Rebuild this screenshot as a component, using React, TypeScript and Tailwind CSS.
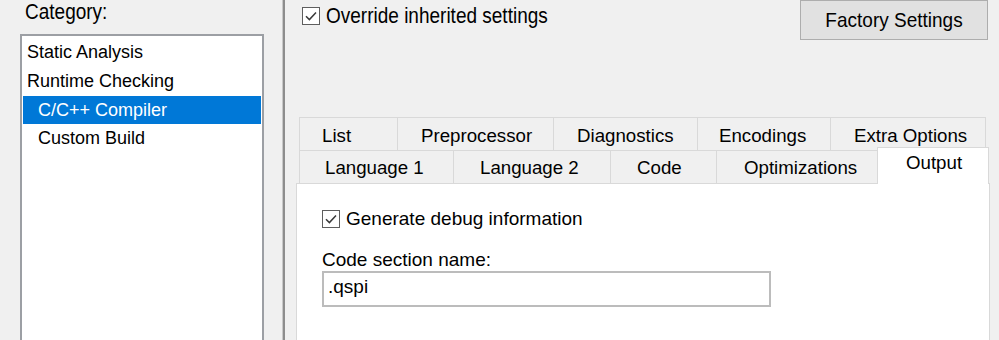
import React from "react";

const CheckBox = () => (
  <span className="flex h-[18px] w-[18px] shrink-0 items-center justify-center border-[1.5px] border-[#5e5e5e] bg-white">
    <svg width="14" height="14" viewBox="0 0 14 14">
      <path d="M2 7.2 L5.4 10.6 L12 3.6" fill="none" stroke="#3a3a3a" strokeWidth="1.5" />
    </svg>
  </span>
);

type Tab = { label: string; w: number; pl: number; selected?: boolean };

const row1: Tab[] = [
  { label: "List", w: 98, pl: 22 },
  { label: "Preprocessor", w: 156, pl: 23 },
  { label: "Diagnostics", w: 144, pl: 23 },
  { label: "Encodings", w: 133, pl: 21 },
  { label: "Extra Options", w: 156, pl: 23 },
];

const row2: Tab[] = [
  { label: "Language 1", w: 154, pl: 25 },
  { label: "Language 2", w: 157, pl: 26 },
  { label: "Code", w: 106, pl: 26 },
  { label: "Optimizations", w: 161, pl: 27 },
  { label: "Output", w: 112, pl: 28, selected: true },
];

export default function App() {
  return (
    <div className="flex h-[340px] w-[999px] overflow-hidden bg-[#f0f0f0] font-['Liberation_Sans',Arial,sans-serif] text-black">
      {/* Left column */}
      <div className="flex w-[282px] shrink-0 flex-col">
        <div className="h-[34px] shrink-0 pl-[25px] pt-[1px]">
          <span className="inline-block origin-center scale-y-[1.15] text-[19px] leading-[22px]">Category:</span>
        </div>
        <div className="ml-[20px] h-[320px] w-[244px] shrink-0 border-2 border-[#9c9fa4] bg-white pt-[2px] text-[18px] leading-[29px]">
          <div className="mx-px h-[29px] pl-[4px]">Static Analysis</div>
          <div className="mx-px h-[29px] pl-[4px]">Runtime Checking</div>
          <div className="mx-px h-[28px] bg-[#0078d7] pl-[15px] leading-[28px] text-white">C/C++ Compiler</div>
          <div className="mx-px h-[29px] pl-[15px]">Custom Build</div>
        </div>
      </div>

      {/* Separator */}
      <div className="flex w-[3px] shrink-0">
        <div className="w-px bg-[#c8c8c8]" />
        <div className="w-[2px] bg-[#8d8d8d]" />
      </div>

      {/* Right column */}
      <div className="flex w-[702px] flex-col pl-[11px]">
        <div className="flex h-[117px] shrink-0 items-start justify-between">
          <div className="mt-[5px] ml-[6px] flex items-center gap-[6px]">
            <CheckBox />
            <span className="inline-block origin-center scale-y-[1.17] text-[19px] leading-[22px]">
              Override inherited settings
            </span>
          </div>
          <button className="-mr-px flex h-[40px] w-[188px] items-center justify-center border border-[#adadad] bg-[#e1e1e1]">
            <span className="inline-block origin-center scale-y-[1.1] text-[19px] leading-[22px]">Factory Settings</span>
          </button>
        </div>

        {/* Tabs */}
        <div className="w-[694px] shrink-0 text-[18.7px] leading-[22px]">
          <div className="flex h-[33px] pl-[3px]">
            {row1.map((t, i) => (
              <div
                key={t.label}
                style={{ width: t.w, paddingLeft: t.pl }}
                className={
                  "h-[33px] shrink-0 border-t border-l border-[#d9d9d9] pt-[7px] " +
                  (i === row1.length - 1 ? "border-r" : "")
                }
              >
                {t.label}
              </div>
            ))}
          </div>
          <div className="flex h-[34px] items-end border-b border-[#d9d9d9] pl-[3px]">
            {row2.map((t) =>
              t.selected ? (
                <div
                  key={t.label}
                  style={{ width: t.w, paddingLeft: t.pl }}
                  className="relative z-10 -mb-px h-[37px] shrink-0 border-x border-t border-[#d9d9d9] bg-white pt-[4px]"
                >
                  {t.label}
                </div>
              ) : (
                <div
                  key={t.label}
                  style={{ width: t.w, paddingLeft: t.pl }}
                  className="h-[33px] shrink-0 border-t border-l border-[#d9d9d9] pt-[6px]"
                >
                  {t.label}
                </div>
              )
            )}
          </div>

          {/* Panel */}
          <div className="h-[160px] border-x border-[#d9d9d9] bg-white pl-[25px] text-[19px]">
            <div className="box-content flex h-[22px] items-center gap-[6px] pt-[24px]">
              <CheckBox />
              <span>Generate debug information</span>
            </div>
            <div className="mt-[19px]">Code section name:</div>
            <div className="h-[36px] w-[449px] border-2 border-[#bcbcbc] pt-[3px] pl-[4px]">.qspi</div>
          </div>
        </div>
      </div>
    </div>
  );
}
